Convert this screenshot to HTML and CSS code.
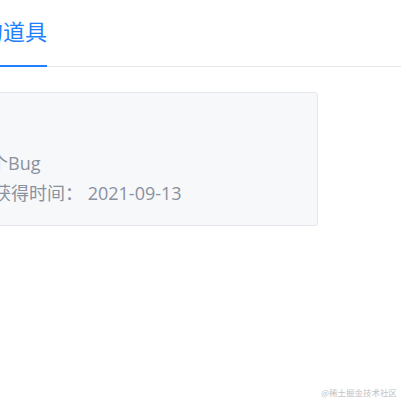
FILE: index.html
```html
<!DOCTYPE html>
<html lang="zh-CN">
<head>
<meta charset="utf-8">
<link rel="stylesheet" href="styles.css">
</head>
<body>
<div class="page">
  <div class="tabs">
    <div class="tab tab-active">我的道具</div>
  </div>
  <div class="list">
    <div class="card">
      <div class="line line-desc">可消灭一个Bug</div>
      <div class="line">获得时间： 2021-09-13</div>
    </div>
  </div>
  <div class="watermark">@稀土掘金技术社区</div>
</div>
</body>
</html>
```

FILE: styles.css
```css
html, body {
  margin: 0;
  padding: 0;
  background: #ffffff;
}
body {
  width: 401px;
  height: 401px;
  overflow: hidden;
  font-family: "Open Sans", "Noto Sans CJK SC", sans-serif;
}
.page {
  position: relative;
  width: 401px;
  height: 401px;
}
.tabs {
  display: flex;
  border-bottom: 1px solid #e4e6eb;
  height: 66px;
}
.tab {
  margin-left: -41px;
  padding-top: 19px;
  padding-bottom: 24px;
  height: 22px;
  font-size: 22px;
  line-height: 22px;
  color: #1e80ff;
  font-family: "Noto Sans CJK SC", sans-serif;
  white-space: nowrap;
}
.tab-active {
  border-bottom: 2px solid #1e80ff;
}
.list {
  padding-top: 25px;
}
.card {
  margin-left: -40px;
  width: 324px;
  padding: 55px 0 17px 32px;
  background: #f7f8fa;
  border: 1px solid #e4e6eb;
  border-radius: 3px;
  color: #8a919f;
  font-size: 18px;
}
.line {
  height: 30px;
  line-height: 30px;
  white-space: nowrap;
}
.line-desc {
  margin-left: -75px;
}
.watermark {
  position: absolute;
  right: 4px;
  bottom: 3px;
  font-family: "Noto Sans CJK SC", sans-serif;
  font-size: 8.5px;
  line-height: 12px;
  color: #c2c2c2;
  white-space: nowrap;
}
```
